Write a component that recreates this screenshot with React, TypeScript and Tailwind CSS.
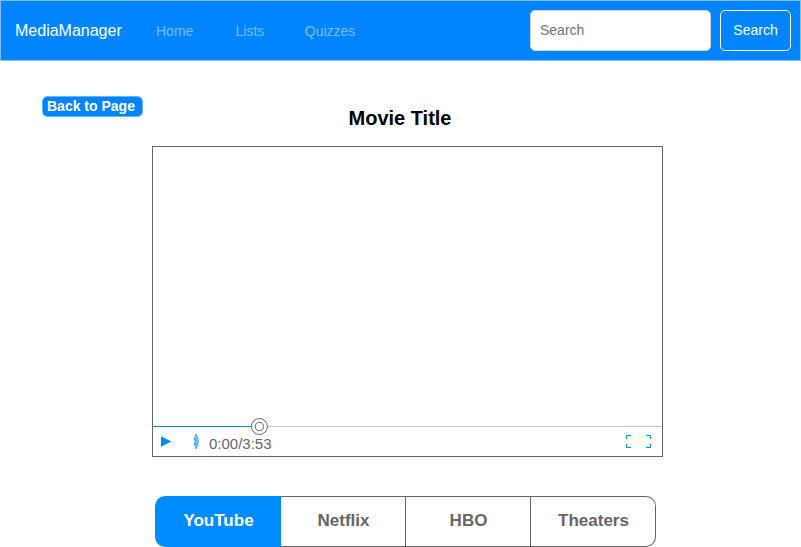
import React from "react";

function NavBar() {
  return (
    <header className="flex h-[61px] w-full items-center border border-[#80bfff] bg-[#0085ff] text-sm">
      <span className="ml-[14px] w-[141px] text-base leading-5 text-white">MediaManager</span>
      <nav className="flex leading-5 text-[#78bdff]">
        <a className="w-[79.5px] pt-px">Home</a>
        <a className="w-[69.25px] pt-px">Lists</a>
        <a className="pt-px">Quizzes</a>
      </nav>
      <form className="ml-auto mr-[9px] flex gap-[9px]">
        <input
          placeholder="Search"
          className="h-[41px] w-[181px] rounded-[5px] border border-[#ced4da] bg-white px-[9px] pb-[2px] placeholder:text-[#6c757d] placeholder:opacity-100"
        />
        <button type="button" className="h-[41px] w-[71px] rounded-[5px] border border-white pb-[2px] text-white">
          Search
        </button>
      </form>
    </header>
  );
}

function Player() {
  return (
    <section className="ml-[152px] mt-[18px] flex h-[311px] w-[511px] flex-col border border-[#666666]">
      <div className="h-[271px]" />
      <svg width="509" height="17" className="block shrink-0" fill="none">
        <path d="M0 8.5H509" stroke="#c0c0c0" />
        <path d="M0 8.5H99" stroke="#008cff" />
        <circle cx="106.4" cy="8.5" r="8" fill="white" stroke="#666666" />
        <circle cx="106.4" cy="8.5" r="4.2" fill="white" stroke="#666666" />
      </svg>
      <div className="flex h-[21px] items-start">
        <svg width="11" height="11" className="ml-[8px] mt-px" fill="#008cff">
          <path d="M0 0.2L10.4 5.5L0 10.8Z" />
        </svg>
        <svg width="7" height="17" className="ml-[21px] -mt-[2px]" fill="none" stroke="#008cff" strokeWidth="0.8">
          <path d="M1.2 4.8Q3.2 8.5 1.2 12.2L1.8 13Q4.2 8.5 1.8 4Z" />
          <path d="M2.2 1.8Q6.2 8.5 2.2 15.2L3 15.8Q7.6 8.5 3 1.2Z" />
        </svg>
        <span className="ml-[9px] text-[15px] leading-[18px] text-[#666666]">0:00/3:53</span>
        <svg width="26" height="13" className="ml-auto mr-[10px]" fill="none" stroke="#008cff">
          <path d="M5 0.5H0.5V4M0.5 9V12.5H5M20 0.5H24.5V4M24.5 9V12.5H20" />
        </svg>
      </div>
    </section>
  );
}

function Sources() {
  return (
    <div className="ml-[155px] mt-[39px] flex h-[51px] w-[501px] text-[17px] font-bold text-[#666666]">
      <button className="w-[126px] rounded-l-[10px] bg-[#008cff] pb-[2px] pl-px text-white">YouTube</button>
      <button className="w-[125px] border-y border-r border-[#666666] pb-[2px] pl-px">Netflix</button>
      <button className="w-[125px] border-y border-r border-[#666666] pb-[2px] pl-px">HBO</button>
      <button className="w-[125px] rounded-r-[10px] border-y border-r border-[#666666] pb-[2px] pl-px">Theaters</button>
    </div>
  );
}

export default function App() {
  return (
    <div className="h-[547px] w-[801px] overflow-hidden bg-white font-['Liberation_Sans',Arial,sans-serif]">
      <NavBar />
      <main>
        <div className="flex h-[67px] pt-[35px]">
          <button className="ml-[42px] h-[21px] w-[101px] rounded-[5px] border border-[#66b6ff] bg-[#0085ff] bg-clip-padding pl-1 text-left text-sm font-bold leading-[19px] text-white">
            Back to Page
          </button>
          <h1 className="ml-[205.5px] mt-[10px] text-xl font-bold leading-6 text-black">Movie Title</h1>
        </div>
        <Player />
        <Sources />
      </main>
    </div>
  );
}
